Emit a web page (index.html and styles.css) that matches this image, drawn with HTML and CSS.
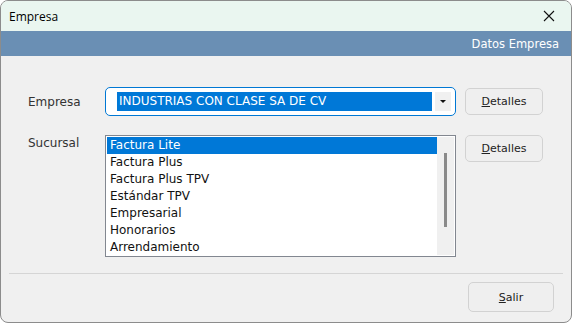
FILE: index.html
```html
<!DOCTYPE html>
<html lang="es">
<head>
    <meta charset="UTF-8">
    <title>Empresa</title>
    <link rel="stylesheet" href="styles.css">
</head>
<body>
    <div class="window">
        <div class="titlebar">
            <span class="title">Empresa</span>
            <svg class="close" width="12" height="12" viewBox="0 0 12 12"><path d="M1 1 L11 11 M11 1 L1 11" stroke="#111" stroke-width="1.1"/></svg>
        </div>
        <div class="banner">Datos Empresa</div>
        <div class="content">
            <div class="form">
                <div class="label">Empresa</div>
                <div class="combo">
                    <div class="combo-value">INDUSTRIAS CON CLASE SA DE CV</div>
                    <div class="combo-arrow"><svg width="6" height="4" viewBox="0 0 6 4"><path d="M0 0 H6 L3 3 Z" fill="#111"/></svg></div>
                </div>
                <button class="btn"><u>D</u>etalles</button>

                <div class="label label-top">Sucursal</div>
                <div class="listbox">
                    <ul class="items">
                        <li class="selected">Factura Lite</li>
                        <li>Factura Plus</li>
                        <li>Factura Plus TPV</li>
                        <li>Estándar TPV</li>
                        <li>Empresarial</li>
                        <li>Honorarios</li>
                        <li>Arrendamiento</li>
                    </ul>
                    <div class="scroll"><div class="thumb"></div></div>
                </div>
                <button class="btn btn-top"><u>D</u>etalles</button>
            </div>
            <div class="footer">
                <button class="btn btn-exit"><u>S</u>alir</button>
            </div>
        </div>
    </div>
</body>
</html>
```

FILE: styles.css
```css
* { box-sizing: border-box; }
body { margin: 0; background: #fff; font-family: "DejaVu Sans", sans-serif; }
.window { width: 572px; height: 323px; border: 1px solid #8c8c8c; border-radius: 8px; overflow: hidden; display: flex; flex-direction: column; background: #f0f0f0; }
.titlebar { height: 30px; background: #eaf6f0; display: flex; align-items: center; justify-content: space-between; padding: 0 16px 0 8px; flex-shrink: 0; }
.title { font-family: "Open Sans", sans-serif; font-size: 12px; color: #000; }
.banner { height: 25px; background: #6a8fb4; color: #fff; font-size: 11.5px; text-align: right; padding: 6px 12px 0 0; flex-shrink: 0; }
.content { flex: 1; display: flex; flex-direction: column; padding: 31px 0 0 0; }
.form { display: grid; grid-template-columns: 68px 351px 78px; column-gap: 9px; row-gap: 19px; padding-left: 27px; align-items: start; }
.label { font-size: 12px; color: #333; align-self: center; }
.label-top { align-self: start; padding-top: 1px; }
.combo { height: 29px; border: 1px solid #0078d4; border-radius: 5px; background: #fff; display: flex; align-items: center; padding: 0 4px 0 11px; }
.combo-value { flex: 1; height: 19px; background: #0078d7; color: #fff; font-size: 12px; line-height: 19px; padding-left: 2px; white-space: nowrap; overflow: hidden; margin-right: 3px; }
.combo-arrow { width: 16px; height: 19px; background: #f0f0f0; display: flex; align-items: center; justify-content: center; }
.btn { font-family: inherit; font-size: 11px; color: #222; background: #efefef; border: 1px solid #d2d2d2; border-radius: 5px; height: 27px; margin-top: 1px; cursor: pointer; padding: 0; }
.btn u { text-decoration-color: #222; }
.btn-top { margin-top: 0; }
.listbox { height: 122px; border: 1px solid #828790; background: #fff; display: flex; padding: 1px; }
.items { flex: 1; list-style: none; margin: 0; padding: 0; }
.items li { height: 17px; line-height: 17px; font-size: 12px; color: #111; padding-left: 3px; white-space: nowrap; }
.items li.selected { background: #0078d7; color: #fff; }
.scroll { width: 17px; background: #f0f0f0; display: flex; justify-content: center; padding-top: 16px; }
.thumb { width: 3px; height: 74px; background: #8a8a8a; }
.footer { margin: 16px 8px 0 8px; border-top: 1px solid #d5d5d5; display: flex; justify-content: flex-end; padding: 8px 9px 0 0; }
.btn-exit { width: 86px; height: 30px; margin-top: 0; }
```
